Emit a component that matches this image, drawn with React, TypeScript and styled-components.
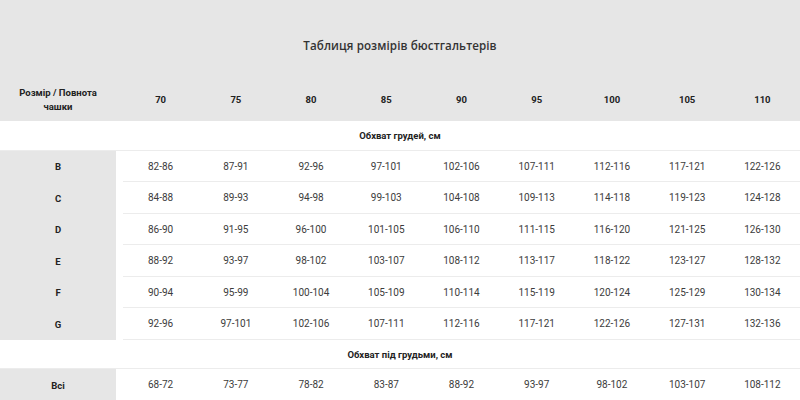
import React from 'react';
import styled, { createGlobalStyle } from 'styled-components';

const GlobalStyle = createGlobalStyle`
  html, body {
    margin: 0;
    padding: 0;
    background: #ffffff;
  }
  body {
    font-family: Roboto, "Noto Sans", sans-serif;
    color: #333333;
  }
`;

const Page = styled.div`
  width: 800px;
  height: 400px;
  overflow: hidden;
  background: #ffffff;
`;

const Head = styled.div`
  background: #e6e6e6;
`;

const Title = styled.h2`
  margin: 0;
  height: 80px;
  padding-top: 38px;
  box-sizing: border-box;
  text-align: center;
  font-family: "Open Sans", "Noto Sans", sans-serif;
  font-size: 11.6px;
  font-weight: 600;
  color: #333333;
  letter-spacing: 0.1px;
`;

const Grid = styled.div`
  display: grid;
  grid-template-columns: 123px repeat(9, 1fr);
`;

const HeadCell = styled.div<{ $label?: boolean }>`
  height: 40px;
  display: flex;
  align-items: center;
  justify-content: center;
  text-align: center;
  font-size: 9.5px;
  font-weight: 700;
  line-height: 14px;
  color: #222222;
  padding-right: ${p => (p.$label ? '7px' : '0')};
  padding-bottom: 1px;
`;

const SectionRow = styled.div<{ $h: number }>`
  grid-column: 1 / -1;
  height: ${p => p.$h}px;
  display: flex;
  align-items: center;
  justify-content: center;
  font-size: 9.5px;
  font-weight: 700;
  color: #222222;
  border-bottom: 1px solid #ececec;
  box-sizing: border-box;
`;

const LabelCell = styled.div<{ $h: number }>`
  height: ${p => p.$h}px;
  background: #e6e6e6;
  border-right: 7px solid #ffffff;
  box-sizing: border-box;
  display: flex;
  align-items: center;
  justify-content: center;
  font-size: 9.5px;
  font-weight: 700;
  color: #222222;
`;

const DataCell = styled.div<{ $h: number }>`
  height: ${p => p.$h}px;
  border-bottom: 1px solid #ececec;
  box-sizing: border-box;
  display: flex;
  align-items: center;
  justify-content: center;
  font-size: 10px;
  color: #3c3c3c;
`;

const bands = ['70', '75', '80', '85', '90', '95', '100', '105', '110'];

const bust: [string, number][] = [
  ['B', 82],
  ['C', 84],
  ['D', 86],
  ['E', 88],
  ['F', 90],
  ['G', 92],
];

const heights = [31, 32, 31, 32, 31, 32];

const range = (start: number, i: number) => `${start + i * 5}-${start + i * 5 + 4}`;

export default function App() {
  return (
    <Page>
      <GlobalStyle />
      <Head>
        <Title>Таблиця розмірів бюстгальтерів</Title>
        <Grid>
          <HeadCell $label>
            Розмір / Повнота
            <br />
            чашки
          </HeadCell>
          {bands.map(b => (
            <HeadCell key={b}>{b}</HeadCell>
          ))}
        </Grid>
      </Head>
      <Grid>
        <SectionRow $h={30}>Обхват грудей, см</SectionRow>
        {bust.map(([cup, start], r) => (
          <React.Fragment key={cup}>
            <LabelCell $h={heights[r]}>{cup}</LabelCell>
            {bands.map((b, i) => (
              <DataCell key={b} $h={heights[r]}>
                {range(start, i)}
              </DataCell>
            ))}
          </React.Fragment>
        ))}
        <SectionRow $h={29}>Обхват під грудьми, см</SectionRow>
        <LabelCell $h={32}>Всі</LabelCell>
        {bands.map((b, i) => (
          <DataCell key={b} $h={32}>
            {range(68, i)}
          </DataCell>
        ))}
      </Grid>
    </Page>
  );
}
